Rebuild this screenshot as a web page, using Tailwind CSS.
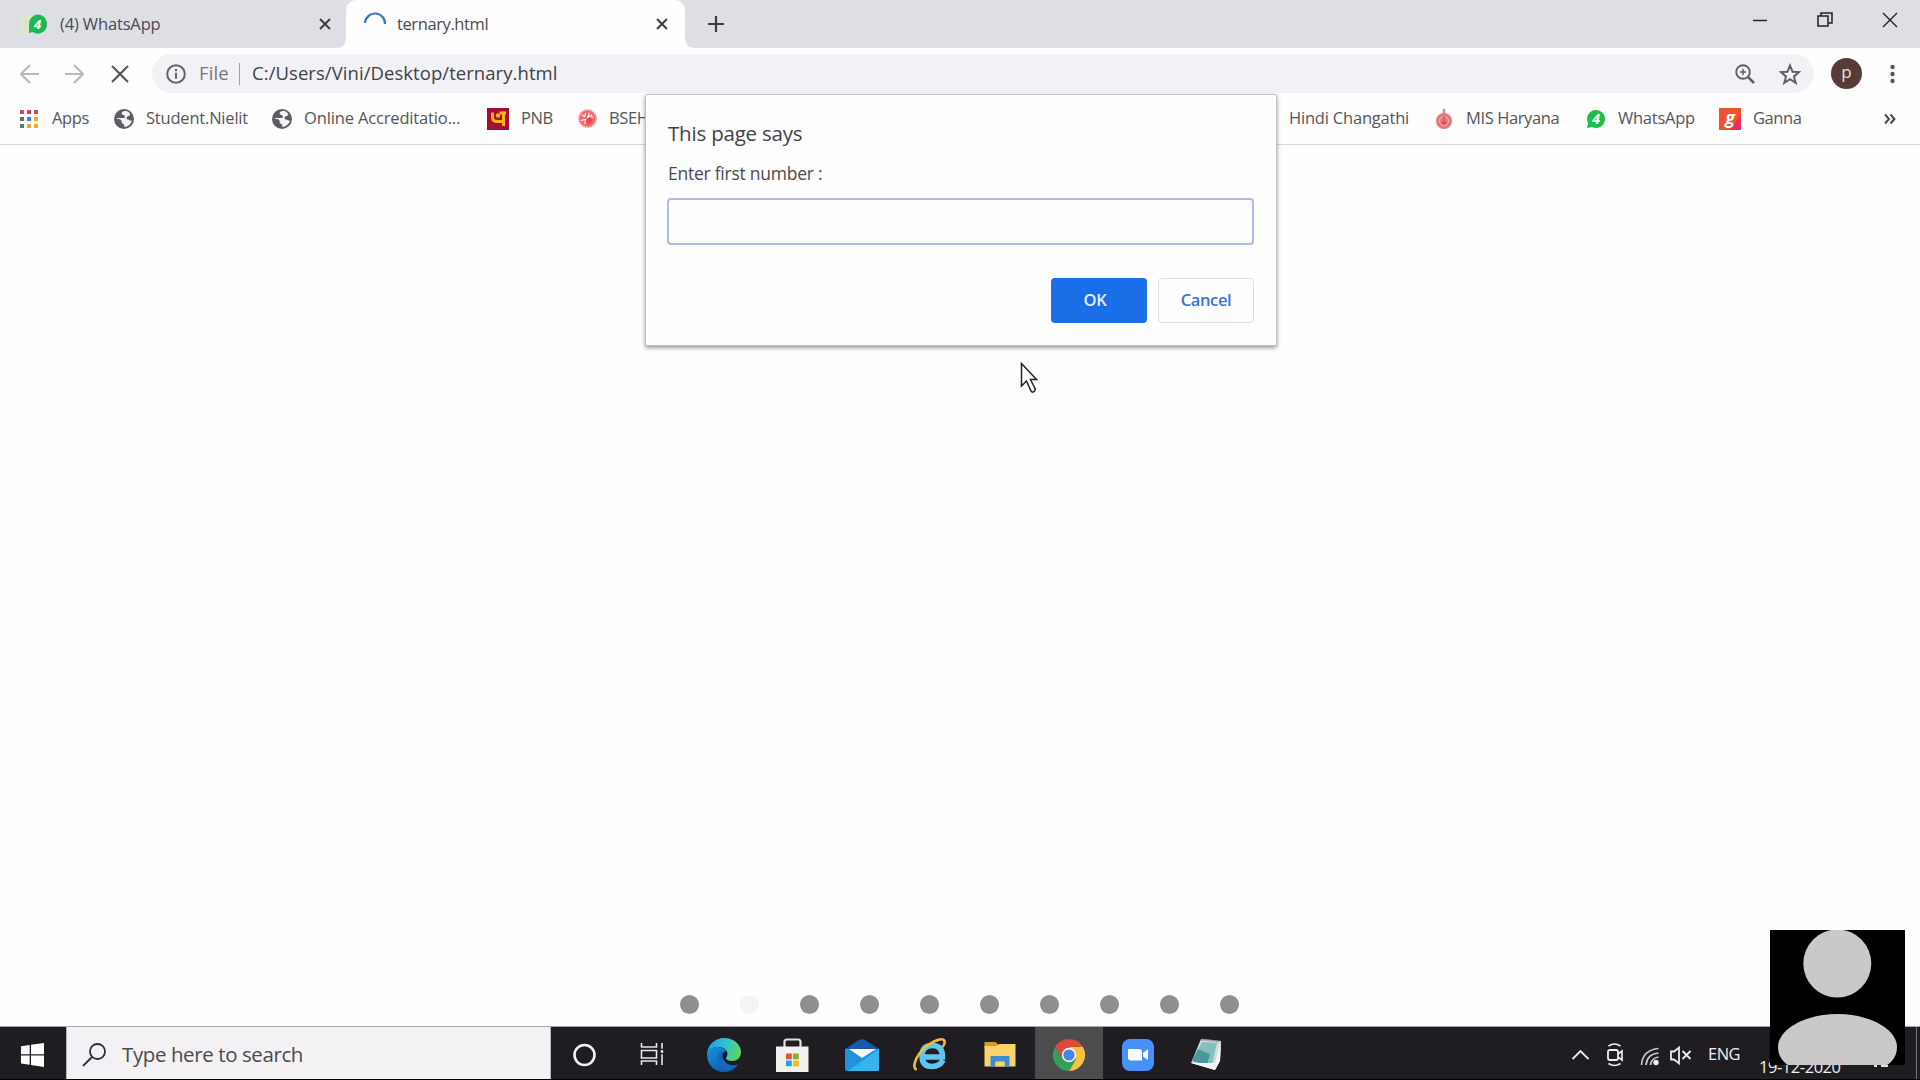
<!DOCTYPE html>
<html lang="en">
<head>
<meta charset="utf-8">
<title>ternary.html</title>
<script src="https://cdn.jsdelivr.net/npm/@tailwindcss/browser@4"></script>
</head>
<body class="w-[1920px] h-[1080px] overflow-hidden bg-[#fefefe] font-['Open_Sans',sans-serif] text-[#4a4a4f] whitespace-nowrap relative flex flex-col">

<!-- Tab strip -->
<header class="h-12 shrink-0 bg-[#dedfe5] flex text-[16.5px]">
  <div class="w-[346px] flex items-center pl-5">
    <svg class="w-7 h-6" viewBox="0 0 28 24"><path d="M0 2h12v20H0z" fill="#dfe5cf"/><path d="M9 21V12a9 9.500 0 1 1 4 8z" fill="#1db954"/><text x="17.500" y="16.500" font-size="13" font-weight="700" font-style="italic" text-anchor="middle" fill="#fff">4</text></svg>
    <span class="w-[258px] ml-3 tracking-[-0.15px]">(4) WhatsApp</span>
    <svg class="w-3.5 h-3.5" viewBox="0 0 14 14" stroke="#3c3d42" stroke-width="2"><path d="M2 2l10 10M12 2L2 12"/></svg>
  </div>
  <div class="w-[339px] flex items-center relative bg-[#fefefe] rounded-t-[10px] pl-[17px]">
    <svg class="absolute -left-2.5 bottom-0 w-2.5 h-2.5" viewBox="0 0 10 10"><path d="M10 0v10H0Q10 10 10 0" fill="#fefefe"/></svg>
    <svg class="absolute -right-2.5 bottom-0 w-2.5 h-2.5" viewBox="0 0 10 10"><path d="M0 0v10h10Q0 10 0 0" fill="#fefefe"/></svg>
    <svg class="w-6 h-6" viewBox="0 0 24 24" fill="none" stroke="#3f6fd4" stroke-width="2.200"><path d="M2 11A10 10 0 0 1 22 12"/></svg>
    <span class="w-[258px] ml-2.5 tracking-[-0.4px]">ternary.html</span>
    <svg class="w-3.5 h-3.5" viewBox="0 0 14 14" stroke="#3c3d42" stroke-width="2"><path d="M2 2l10 10M12 2L2 12"/></svg>
  </div>
  <div class="flex-1 flex items-center pl-[22px]">
    <svg class="w-[18px] h-[18px]" viewBox="0 0 18 18" stroke="#3c3d42" stroke-width="2.200"><path d="M9 1v16M1 9h16"/></svg>
  </div>
  <div class="w-[168px] flex pt-2.5 gap-[49px]">
    <svg class="w-4 h-5" viewBox="0 0 16 20" stroke="#222" stroke-width="1.500"><path d="M1 10.500h14"/></svg>
    <svg class="w-4 h-5" viewBox="0 0 16 20" fill="none" stroke="#222" stroke-width="1.500"><path d="M1 6h10v10H1zM4 6V3h11v10h-4"/></svg>
    <svg class="w-4 h-5" viewBox="0 0 16 20" stroke="#222" stroke-width="1.400"><path d="M1 3l14 14M15 3L1 17"/></svg>
  </div>
</header>

<!-- Address bar -->
<div class="h-[51px] shrink-0 flex items-center text-[19px]">
  <svg class="w-5 h-5 ml-5" viewBox="0 0 20 20" fill="none" stroke="#b9b8bd" stroke-width="2.200"><path d="M19 10H2M10 1l-9 9 9 9"/></svg>
  <svg class="w-5 h-5 ml-6" viewBox="0 0 20 20" fill="none" stroke="#b9b8bd" stroke-width="2.200"><path d="M1 10h17M10 1l9 9-9 9"/></svg>
  <svg class="w-[18px] h-[18px] ml-[27px]" viewBox="0 0 18 18" stroke="#55565b" stroke-width="2.200"><path d="M1 1l16 16M17 1L1 17"/></svg>
  <div class="w-[1662px] h-[39px] ml-[23px] rounded-full bg-[#f2f2f6] flex items-center pl-3.5">
    <svg class="w-5 h-5" viewBox="0 0 20 20" fill="none" stroke="#626368" stroke-width="2"><circle cx="10" cy="10" r="8.800"/><path d="M10 8.800v6M10 5v2.200"/></svg>
    <span class="w-10 ml-[13px] pb-px text-[#77777c] text-[18.5px] tracking-[0.1px]">File</span>
    <span class="w-px h-[22px] bg-[#a2a2a7]"></span>
    <span class="ml-3 pb-px text-[#414146] text-[18.5px] w-[1483px] tracking-[0.06px]">C:/Users/Vini/Desktop/ternary.html</span>
    <svg class="w-5 h-5" viewBox="0 0 20 20" fill="none" stroke="#5f6065" stroke-width="1.900"><circle cx="8" cy="8" r="6.800"/><path d="M13 13l6 6" stroke-width="2.500"/><path d="M5 8h6M8 5v6" stroke-width="1.500"/></svg>
    <svg class="w-[22px] h-[22px] ml-6" viewBox="0 0 22 22" fill="none" stroke="#5f6065" stroke-width="2"><path d="M11 2.500l2.500 6.200 6.500.4-5 4.300 1.700 6.500-5.700-3.700-5.700 3.700L7 13.400 2 9.100l6.500-.4z"/></svg>
  </div>
  <div class="w-[31px] h-[31px] ml-[17px] rounded-full bg-[#573b37] text-[#e8dfdd] text-[17px] leading-[27px] text-center">p</div>
  <svg class="w-5 h-5 ml-5" viewBox="0 0 20 20" fill="#55565b"><circle cx="10.500" cy="3" r="2.200"/><circle cx="10.500" cy="10" r="2.200"/><circle cx="10.500" cy="17" r="2.200"/></svg>
</div>

<!-- Bookmarks -->
<nav class="h-[46px] shrink-0 border-b border-[#d6d6da] pl-5 pb-[6px] flex items-center text-[16.5px] tracking-[-0.4px] text-[#55555a]">
  <div class="w-[94px] flex items-center gap-3">
    <svg class="w-5 h-5" viewBox="0 0 20 20"><path d="M0 1h4v4H0zM7 1h4v4H7zM14 1h4v4h-4z" fill="#d9454c"/><path d="M0 8h4v4H0zM0 15h4v4H0z" fill="#44895b"/><path d="M7 8h4v4H7z" fill="#3f7de0"/><path d="M14 8h4v4h-4zM7 15h4v4H7zM14 15h4v4h-4z" fill="#f5aa2c"/></svg>
    <span>Apps</span>
  </div>
  <div class="w-[158px] flex items-center gap-3">
    <svg class="w-5 h-5" viewBox="0 0 20 20"><circle cx="10" cy="10" r="10" fill="#5c5d62"/><path d="M13 2c-4-.5-6 1-5 3 1 1.800 3 .8 3 2.800 0 1.700-3 1.200-4.500 1.200C4 9 3 9 2 9.500c2 .5 3.500 0 5 1.500s0 3 1.500 3.500S11 17 10 18c4 0 7-3 8-6.500-2 .8-2.500-1-4-1s-2-1-1-2.500 3-.5 3-2.500-1.500-2-3-3.500z" fill="#f4f4f6"/></svg>
    <span class="tracking-[-0.2px]">Student.Nielit</span>
  </div>
  <div class="w-[215px] flex items-center gap-3">
    <svg class="w-5 h-5" viewBox="0 0 20 20"><circle cx="10" cy="10" r="10" fill="#5c5d62"/><path d="M13 2c-4-.5-6 1-5 3 1 1.800 3 .8 3 2.800 0 1.700-3 1.200-4.500 1.200C4 9 3 9 2 9.500c2 .5 3.500 0 5 1.500s0 3 1.500 3.500S11 17 10 18c4 0 7-3 8-6.500-2 .8-2.500-1-4-1s-2-1-1-2.500 3-.5 3-2.500-1.500-2-3-3.500z" fill="#f4f4f6"/></svg>
    <span class="tracking-[-0.15px]">Online Accreditatio...</span>
  </div>
  <div class="w-[91px] flex items-center gap-3">
    <svg class="w-[22px] h-[22px]" viewBox="0 0 22 22"><path d="M0 0h22v22H0z" fill="#a10f35"/><path d="M5.500 4.500V9q0 4.500 4.500 4.500h6.500M12.500 5H19M16.500 5v13" fill="none" stroke="#fbb216" stroke-width="3"/><circle cx="11" cy="7.500" r="2.200" fill="#fbb216"/></svg>
    <span>PNB</span>
  </div>
  <div class="w-[711px] flex items-center gap-3">
    <svg class="w-[19px] h-[19px]" viewBox="0 0 20 20"><circle cx="10" cy="10" r="9" fill="#f2686b" stroke="#f59a9c" stroke-width="2" stroke-dasharray="2 1"/><path d="M4 6l3 2 1-4M12 4l-2 5 5-3M3 12l5-1-1 5M13 8l3 1" fill="none" stroke="#fff" stroke-width="1.100"/><path d="M8 12l5-4 2 5-4 3z" fill="#ee4549"/></svg>
    <span>BSEH</span>
  </div>
  <div class="w-[145px] tracking-[-0.2px]">Hindi Changathi</div>
  <div class="w-[152px] flex items-center gap-3">
    <svg class="w-5 h-5" viewBox="0 0 20 20"><path d="M10 0v5" stroke="#ec8a8d" stroke-width="2.500"/><circle cx="10" cy="12" r="8" fill="#e8777c"/><circle cx="10" cy="12" r="4.500" fill="none" stroke="#f7b9bb"/><path d="M10 7v9M7 14h6" stroke="#cf4f58" stroke-width="1.300"/></svg>
    <span>MIS Haryana</span>
  </div>
  <div class="w-[133px] flex items-center gap-3">
    <svg class="w-5 h-5" viewBox="0 0 20 20"><path d="M1 19l1-5a9 9 0 1 1 4 4z" fill="#1fbe47"/><text x="10" y="15" font-size="14" font-weight="700" font-style="italic" text-anchor="middle" fill="#fff">4</text></svg>
    <span class="tracking-[-0.25px]">WhatsApp</span>
  </div>
  <div class="w-[165px] flex items-center gap-3">
    <svg class="w-[22px] h-[22px] overflow-visible" viewBox="0 0 22 22"><path d="M0 0h22v22H0z" fill="#f0532b"/><path d="M22 8v14H10z" fill="#e72c63"/><text x="11" y="15.500" font-size="18" font-weight="700" font-style="italic" text-anchor="middle" fill="#fff">g</text></svg>
    <span>Ganna</span>
  </div>
  <svg class="w-3 h-3" viewBox="0 0 12 12" fill="none" stroke="#44454a" stroke-width="1.900"><path d="M1 1.500L5 6l-4 4.500M6.500 1.500L10.500 6l-4 4.500"/></svg>
</nav>

<!-- Page area -->
<main class="flex-1 flex items-end justify-center pr-px pb-3 gap-[41px]">
  <i class="size-[19px] rounded-full bg-[#8e8e8e]"></i>
  <i class="size-[19px] rounded-full bg-[#f4f4f4]"></i>
  <i class="size-[19px] rounded-full bg-[#8e8e8e]"></i>
  <i class="size-[19px] rounded-full bg-[#8e8e8e]"></i>
  <i class="size-[19px] rounded-full bg-[#8e8e8e]"></i>
  <i class="size-[19px] rounded-full bg-[#8e8e8e]"></i>
  <i class="size-[19px] rounded-full bg-[#8e8e8e]"></i>
  <i class="size-[19px] rounded-full bg-[#8e8e8e]"></i>
  <i class="size-[19px] rounded-full bg-[#8e8e8e]"></i>
  <i class="size-[19px] rounded-full bg-[#8e8e8e]"></i>
</main>

<!-- Taskbar -->
<footer class="h-[54px] shrink-0 bg-[#1f1d21] border-t border-t-[#a8a8ab] border-b border-b-black flex items-center">
  <div class="w-[66px] pl-[21px] pt-1">
    <svg class="w-6 h-6" viewBox="0 0 24 24" fill="#fff"><path d="M0 3.200L8.700 2v9.200H0zM10 1.800L23 0v11.200H10zM0 12.500h8.700v9.200L0 20.500zM10 12.500h13V24l-13-2z"/></svg>
  </div>
  <div class="w-[485px] h-full bg-[#f3f1f4] border-x border-[#b5b4b8] flex items-center pl-[15px] pt-[3px]">
    <svg class="w-6 h-6" viewBox="0 0 24 24" fill="none" stroke="#303034" stroke-width="1.800"><circle cx="15.500" cy="8.500" r="7.500"/><path d="M10 14L1 23"/></svg>
    <span class="ml-4 text-[20.5px] text-[#4b4a4f] tracking-[-0.4px]">Type here to search</span>
  </div>
  <svg class="w-[68px] h-[52px]" viewBox="0 0 68 52" fill="none" stroke="#f2f2f2" stroke-width="2.600"><circle cx="33.500" cy="28" r="10"/></svg>
  <svg class="w-[70px] h-[52px]" viewBox="618.500 1027 70 52" fill="none" stroke="#e8e8e8" stroke-width="1.600"><path d="M641 1043v4h15v-4M641 1065v-4h15v4M641 1050.500h15v7.500h-15zM661.500 1043v22"/><path d="M659.500 1049.500h4v4h-4z" fill="#fff" stroke="#1f1d21"/></svg>
  <!-- Edge -->
  <svg class="w-[70px] h-[52px]" viewBox="689 1027 70 52">
    <defs>
      <linearGradient id="eg" x1="0" x2="1" y1=".3" y2=".5"><stop stop-color="#1b9de2"/><stop offset=".5" stop-color="#2cc3d4"/><stop offset="1" stop-color="#62d45a"/></linearGradient>
      <linearGradient id="eb" x1="0" x2="1" y1="0" y2="1"><stop stop-color="#1d92e0"/><stop offset="1" stop-color="#0c4a9e"/></linearGradient>
    </defs>
    <path d="M707 1055c0-10 8-17 17-17s17 6 17 14c0 6-4 9-9 9-4 0-6-1-6-3 0-1 1.500-2 1.500-4 0-4-4-7-9-7-6 0-10 3-11.500 8z" fill="url(#eg)"/>
    <path d="M707 1055c1-6 6-8 10.500-8 5 0 9 3 9.500 6-5 0-6 8 0 11 4 2 8 1.500 11 .5-3 5-8 7.500-14 7.500-10 0-17-8-17-17z" fill="url(#eb)"/>
    <path d="M717 1058c0-5 4-8 8-7-3 2-3 9 3 13 4 2 7 1.500 10 .5-3 4-7 5.500-10 5.500-6 0-11-6-11-12z" fill="#1768bd"/>
    <path d="M726 1051c2 2 1 4 0 6-1 3 2 5 8 4-2 2-6 2-9 0s-4-8 1-10z" fill="#161a26"/>
  </svg>
  <!-- Store -->
  <svg class="w-[68px] h-[52px]" viewBox="759 1027 68 52"><path d="M784.500 1048v-6q0-2.500 2.500-2.500h11q2.500 0 2.500 2.500v6" fill="none" stroke="#e5e2e0" stroke-width="2.200"/><path d="M776 1046.500h32.500V1072H776z" fill="#f3f1f0"/><path d="M786 1053.500h5.800v5.800H786z" fill="#e35335"/><path d="M793 1053.500h5.800v5.800H793z" fill="#86b424"/><path d="M786 1060.500h5.800v5.800H786z" fill="#2aa0dd"/><path d="M793 1060.500h5.800v5.800H793z" fill="#f8b815"/></svg>
  <!-- Mail -->
  <svg class="w-[70px] h-[52px]" viewBox="827 1027 70 52"><path d="M845 1049l14-9q3-1.500 6 0l14 9z" fill="#1759ad"/><path d="M845 1049h34v20q0 2-2 2h-30q-2 0-2-2z" fill="#2093dd"/><path d="M879 1049v20q0 2-2 2h-29z" fill="#35b5ec"/><path d="M849 1049h27l-14 9z" fill="#f5f7fa"/></svg>
  <!-- Internet Explorer -->
  <svg class="w-[68px] h-[52px]" viewBox="897.500 1027 68 52"><path d="M943.500 1060q-3 6.500-11 6.500-10 0-10-10.500t10.500-10.500q10 0 10 11.500h-18" fill="none" stroke="#5cc8f2" stroke-width="5.500"/><path d="M917 1070c-6-4 2-19 13-26 8-5 14-6 15-3 .5 1.500-.5 4-2 6" fill="none" stroke="#f0bd35" stroke-width="2.600"/></svg>
  <!-- File explorer -->
  <svg class="w-[70px] h-[52px]" viewBox="965 1027 70 52"><path d="M984.500 1042h11l3 2.500v4h-14z" fill="#dc9b1d"/><path d="M984.500 1046h12l3-2h16v22.500h-31z" fill="#fbd368"/><path d="M990.500 1067v-11h19v11h-5v-5.500h-9v5.500z" fill="#3f8ed0"/><path d="M995.500 1062h9v4.500h-9z" fill="#fbd368"/></svg>
  <!-- Chrome -->
  <div class="w-[68px] h-full bg-[#4c4b4e]">
    <svg class="w-[68px] h-[52px]" viewBox="-34 -28 68 52"><path d="M-13.900-8A16 16 0 0 1 13.900-8H0L-6.900 4z" fill="#dc4a3e"/><path d="M13.900-8A16 16 0 0 1 0 16L6.900 4 0-8z" fill="#fac23c"/><path d="M0 16A16 16 0 0 1-13.900-8L-6.900 4H6.900z" fill="#34a057"/><circle r="7.200" fill="#f3f3f3"/><circle r="5.600" fill="#4486e8"/></svg>
  </div>
  <!-- Zoom -->
  <svg class="w-[70px] h-[52px]" viewBox="1103 1027 70 52"><rect x="1122" y="1039" width="32" height="32" rx="8" fill="#4a90fb"/><path d="M1128 1049h11q3 0 3 3v8.500h-11q-3 0-3-3zM1143 1053l5-4v11l-5-3.500z" fill="#fff"/></svg>
  <!-- Notepad -->
  <svg class="w-[70px] h-[52px]" viewBox="1173 1027 70 52"><path d="M1201 1039l20 2-1 20-5 9-24-7z" fill="#d5dcdc"/><path d="M1202 1042l15 1-5 22-20-4z" fill="#86bfc1"/><path d="M1198 1049l12 5-3 11-15-4z" fill="#4c979e"/><path d="M1201 1039.500l18 2" stroke="#888f91" stroke-width="2" stroke-dasharray="1.500 1"/><path d="M1215 1070l5-9 1-19-6 21-24 0z" fill="#f3f6f6"/></svg>
  <!-- Tray -->
  <svg class="w-[465px] h-[52px]" viewBox="1243 1027 465 52" fill="none" stroke="#ededed" stroke-width="1.800"><path d="M1572.500 1059l8-8 8 8"/><rect x="1608" y="1050" width="10" height="10" rx="2"/><path d="M1618 1054l4-3v9l-4-3M1608.500 1046q6-4 12 0M1608.500 1063.500q6 4 12 0" stroke-width="1.700"/><path d="M1641.500 1065q1-15 17-16.500M1646 1065q1-11 12.500-12M1650.500 1065q1-7 8-8" stroke="#c9c9c9" stroke-width="1.700"/><circle cx="1656" cy="1062.500" r="1.800" fill="#fff"/><path d="M1671 1051.500h3l5-4v16l-5-4h-3zM1682.500 1051l8 8M1690.500 1051l-8 8"/></svg>
  <span class="w-[51px] pt-[3px] text-[#f0f0f0] text-[16.5px] tracking-[-0.5px]">ENG</span>
  <span class="w-[157px] text-[#f0f0f0] text-[16.5px] tracking-[-0.45px] pt-7">19-12-2020</span>
  <span class="w-px h-full bg-[#77767a]"></span>
</footer>

<!-- Prompt dialog -->
<section class="absolute left-[645px] top-[94px] w-[632px] h-[252px] bg-[#fefefe] rounded-[2px] border border-[#bdbdc2] shadow-[0_2px_4px_rgba(0,0,0,0.4)] px-[22px] flex flex-col">
  <h1 class="mt-[22px] h-8 leading-8 text-[20.5px] text-[#414146] tracking-[-0.2px]">This page says</h1>
  <p class="mt-3 h-6 leading-6 text-[17.5px] text-[#4a4a4f] tracking-[-0.25px]">Enter first number :</p>
  <div class="mt-[13px] -ml-px h-[47px] border-2 border-[#aebbe2] rounded-[4px] shrink-0"></div>
  <div class="mt-[33px] flex justify-end gap-[11px] text-[16.5px] font-semibold">
    <button class="w-24 h-[45px] pb-px rounded-[4px] bg-[#1a6fe8] text-[#e5eefd] pr-2 tracking-[-0.3px]">OK</button>
    <button class="w-24 h-[45px] pb-px rounded-[4px] border border-[#dcdce2] text-[#3f6fdc] tracking-[-0.4px]">Cancel</button>
  </div>
</section>

<!-- Mouse pointer -->
<svg class="absolute left-[1020px] top-[362px] w-[18px] h-[32px]" viewBox="0 0 18 32"><path d="M1.500 1.500v22.500l5-5 4.500 10q1.500 2 3.200 0.500t.8-3L10.500 17.500h6z" fill="#fff" stroke="#222" stroke-width="1.500"/></svg>

<!-- Participant thumbnail -->
<div class="absolute left-[1770px] top-[930px] w-[135px] h-[135px] bg-black overflow-hidden">
  <svg class="w-full h-full" viewBox="0 0 135 135" fill="#cbc8ca"><circle cx="67.300" cy="33.500" r="34"/><path d="M8 117C8 100 34 84 67.500 84S127 100 127 117c0 8-4 14-10 18H18c-6-4-10-10-10-18z"/></svg>
</div>
<div class="absolute left-[1874px] top-[1065px] h-[3px] w-[14px] overflow-hidden flex gap-1">
  <i class="w-[3px] h-[2px] bg-[#e0e0e0]"></i><i class="w-[7px] h-[2px] bg-[#e0e0e0]"></i>
</div>
</body>
</html>
